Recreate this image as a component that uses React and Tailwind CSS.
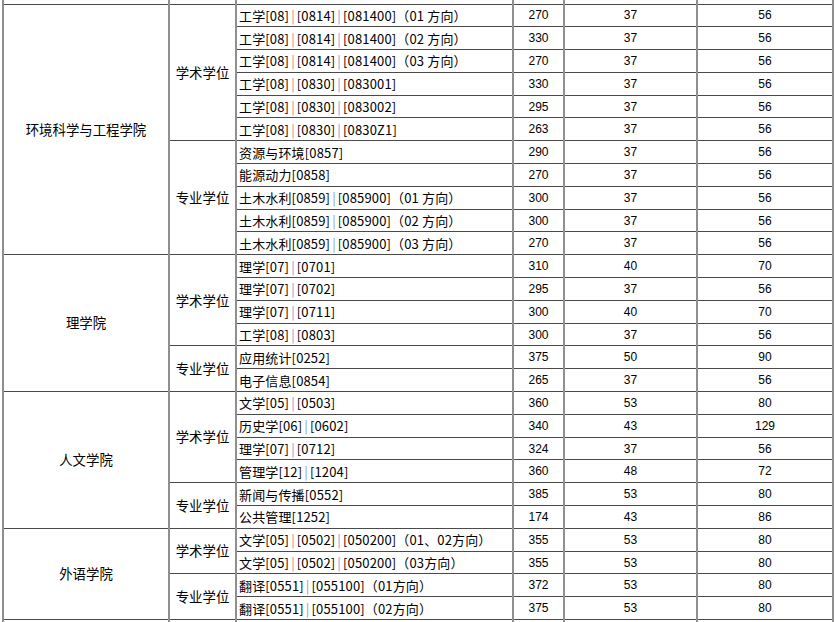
import React from "react";

const data = [
  {
    college: "环境科学与工程学院",
    groups: [
      {
        type: "学术学位",
        rows: [
          [["工学[08]", "[0814]", "[081400]（01 方向）"], "270", "37", "56"],
          [["工学[08]", "[0814]", "[081400]（02 方向）"], "330", "37", "56"],
          [["工学[08]", "[0814]", "[081400]（03 方向）"], "270", "37", "56"],
          [["工学[08]", "[0830]", "[083001]"], "330", "37", "56"],
          [["工学[08]", "[0830]", "[083002]"], "295", "37", "56"],
          [["工学[08]", "[0830]", "[0830Z1]"], "263", "37", "56"],
        ],
      },
      {
        type: "专业学位",
        rows: [
          [["资源与环境[0857]"], "290", "37", "56"],
          [["能源动力[0858]"], "270", "37", "56"],
          [["土木水利[0859]", "[085900]（01 方向）"], "300", "37", "56"],
          [["土木水利[0859]", "[085900]（02 方向）"], "300", "37", "56"],
          [["土木水利[0859]", "[085900]（03 方向）"], "270", "37", "56"],
        ],
      },
    ],
  },
  {
    college: "理学院",
    groups: [
      {
        type: "学术学位",
        rows: [
          [["理学[07]", "[0701]"], "310", "40", "70"],
          [["理学[07]", "[0702]"], "295", "37", "56"],
          [["理学[07]", "[0711]"], "300", "40", "70"],
          [["工学[08]", "[0803]"], "300", "37", "56"],
        ],
      },
      {
        type: "专业学位",
        rows: [
          [["应用统计[0252]"], "375", "50", "90"],
          [["电子信息[0854]"], "265", "37", "56"],
        ],
      },
    ],
  },
  {
    college: "人文学院",
    groups: [
      {
        type: "学术学位",
        rows: [
          [["文学[05]", "[0503]"], "360", "53", "80"],
          [["历史学[06]", "[0602]"], "340", "43", "129"],
          [["理学[07]", "[0712]"], "324", "37", "56"],
          [["管理学[12]", "[1204]"], "360", "48", "72"],
        ],
      },
      {
        type: "专业学位",
        rows: [
          [["新闻与传播[0552]"], "385", "53", "80"],
          [["公共管理[1252]"], "174", "43", "86"],
        ],
      },
    ],
  },
  {
    college: "外语学院",
    groups: [
      {
        type: "学术学位",
        rows: [
          [["文学[05]", "[0502]", "[050200]（01、02方向）"], "355", "53", "80"],
          [["文学[05]", "[0502]", "[050200]（03方向）"], "355", "53", "80"],
        ],
      },
      {
        type: "专业学位",
        rows: [
          [["翻译[0551]", "[055100]（01方向）"], "372", "53", "80"],
          [["翻译[0551]", "[055100]（02方向）"], "375", "53", "80"],
        ],
      },
    ],
  },
];

const cellBase =
  "border-x-2 border-x-[#8f8f8f] border-y border-y-[#4a4a4a] p-0 leading-none";

function Program({ parts }) {
  const out = [];
  parts.forEach((p, i) => {
    if (i > 0) {
      out.push(
        <span
          key={"s" + i}
          className={
            parts.length === 3 && i === 1
              ? "text-[#c28a8a] mx-[2px]"
              : "text-[#8a9ad0] mx-[2px]"
          }
        >
          |
        </span>
      );
    }
    out.push(<span key={"p" + i}>{p}</span>);
  });
  return out;
}

export default function App() {
  const rows = [];
  data.forEach((c, ci) => {
    const total = c.groups.reduce((a, g) => a + g.rows.length, 0);
    c.groups.forEach((g, gi) => {
      g.rows.forEach((r, ri) => {
        rows.push(
          <tr key={`${ci}-${gi}-${ri}`} className="h-[22.8px]">
            {gi === 0 && ri === 0 && (
              <td
                rowSpan={total}
                className={`${cellBase} text-center align-middle text-[13.4px] font-['Noto_Sans_CJK_SC',sans-serif]`}
              >
                {c.college}
              </td>
            )}
            {ri === 0 && (
              <td
                rowSpan={g.rows.length}
                className={`${cellBase} text-center align-middle text-[13.4px] font-['Noto_Sans_CJK_SC',sans-serif]`}
              >
                {g.type}
              </td>
            )}
            <td
              className={`${cellBase} pl-[2px] text-left whitespace-nowrap text-[13px] tracking-[0.15px] font-['Noto_Sans_CJK_SC',sans-serif]`}
            >
              <Program parts={r[0]} />
            </td>
            <td className={`${cellBase} text-center text-[12px] font-['Liberation_Sans',Arial,sans-serif]`}>
              {r[1]}
            </td>
            <td className={`${cellBase} text-center text-[12px] font-['Liberation_Sans',Arial,sans-serif]`}>
              {r[2]}
            </td>
            <td className={`${cellBase} text-center text-[12px] font-['Liberation_Sans',Arial,sans-serif]`}>
              {r[3]}
            </td>
          </tr>
        );
      });
    });
  });

  const dummyCells = (
    <>
      <td className="border-x-2 border-x-[#8f8f8f] p-0"></td>
      <td className="border-x-2 border-x-[#8f8f8f] p-0"></td>
      <td className="border-x-2 border-x-[#8f8f8f] p-0"></td>
      <td className="border-x-2 border-x-[#8f8f8f] p-0"></td>
      <td className="border-x-2 border-x-[#8f8f8f] p-0"></td>
      <td className="border-x-2 border-x-[#8f8f8f] p-0"></td>
    </>
  );

  return (
    <div className="w-[835px] h-[622px] overflow-hidden bg-white text-black">
      <table className="ml-[2px] w-[830px] table-fixed border-collapse">
        <colgroup>
          <col className="w-[166px]" />
          <col className="w-[67px]" />
          <col className="w-[277px]" />
          <col className="w-[51px]" />
          <col className="w-[133px]" />
          <col className="w-[136px]" />
        </colgroup>
        <tbody>
          <tr className="h-[4px]">{dummyCells}</tr>
          {rows}
          <tr className="h-[10px]">{dummyCells}</tr>
        </tbody>
      </table>
    </div>
  );
}
